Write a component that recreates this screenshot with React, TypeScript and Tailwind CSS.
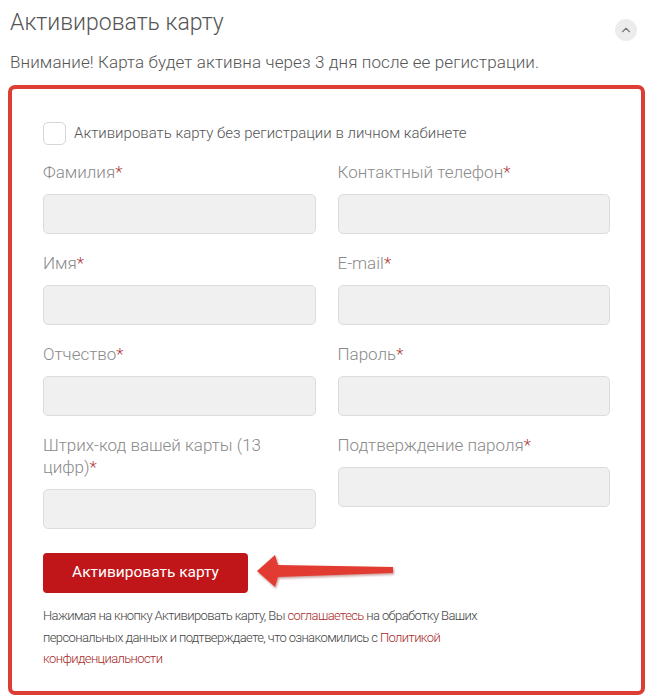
import { ChevronUp } from "lucide-react";

const fields = [
  "Фамилия",
  "Контактный телефон",
  "Имя",
  "E-mail",
  "Отчество",
  "Пароль",
  "Штрих-код вашей карты (13 цифр)",
  "Подтверждение пароля",
];

const Field = ({ label }: { label: string }) => (
  <div className="flex flex-col">
    <label className="text-[17px] leading-[22px] font-light text-[#8a8a8a] mb-[11px] pr-10">
      {label}
      <span className="text-[#b23a3a]">*</span>
    </label>
    <input
      type="text"
      className="h-10 w-full rounded-[5px] border border-[#dcdcdc] bg-[#f0f0f0] outline-none"
    />
  </div>
);

const Arrow = () => (
  <svg width="150" height="50" viewBox="0 0 150 50" className="ml-[2px]">
    <defs>
      <filter id="sh" x="-10%" y="-30%" width="120%" height="160%">
        <feDropShadow dx="1" dy="1.5" stdDeviation="1" floodColor="#7a1a14" floodOpacity="0.45" />
      </filter>
    </defs>
    <polygon
      points="7,23 25,7 28,17 143,19 143,25 28,29 25,39"
      fill="#e23b31"
      filter="url(#sh)"
    />
  </svg>
);

const App = () => {
  return (
    <div
      className="w-[653px] min-h-[699px] bg-white text-[#555]"
      style={{ fontFamily: "Roboto, 'Liberation Sans', sans-serif" }}
    >
      {/* Header */}
      <div className="flex justify-between items-start pt-2 pl-[10px] pr-4">
        <h2 className="text-[23px] leading-[30px] font-light text-[#555]">Активировать карту</h2>
        <div className="mt-[11px] w-[22px] h-[22px] rounded-full bg-[#ececec] flex items-center justify-center">
          <ChevronUp size={14} strokeWidth={2} className="text-[#777]" />
        </div>
      </div>
      <p className="mt-[10px] pl-[10px] text-[17px] leading-[22px] tracking-[0.1px] font-light text-[#555]">
        Внимание! Карта будет активна через 3 дня после ее регистрации.
      </p>

      {/* Form box */}
      <div className="mt-3 mx-2 border-4 border-[#dc3d35] rounded-[7px] pt-[33px] pb-[21px] px-[31px]">
        <label className="flex items-center gap-2">
          <span className="w-[23px] h-[23px] rounded-[5px] border border-[#d6d6d6] bg-white" />
          <span className="text-[15px] font-light text-[#555]">
            Активировать карту без регистрации в личном кабинете
          </span>
        </label>

        <div className="mt-4 grid grid-cols-2 gap-x-[22px] gap-y-[18px] items-start">
          {fields.map((f) => (
            <Field key={f} label={f} />
          ))}
        </div>

        <div className="mt-[19px] flex items-center">
          <button className="w-[205px] h-10 rounded-[4px] bg-[#c0161a] text-white text-[15.5px]">
            Активировать карту
          </button>
          <Arrow />
        </div>

        <p className="mt-[7px] max-w-[445px] text-[13px] leading-[21.5px] tracking-[-0.6px] font-light text-[#444]">
          Нажимая на кнопку Активировать карту, Вы{" "}
          <a className="text-[#a82a2a]">соглашаетесь</a> на обработку Ваших персональных данных и
          подтверждаете, что ознакомились с{" "}
          <a className="text-[#a82a2a]">Политикой конфиденциальности</a>
        </p>
      </div>
    </div>
  );
};

export default App;
